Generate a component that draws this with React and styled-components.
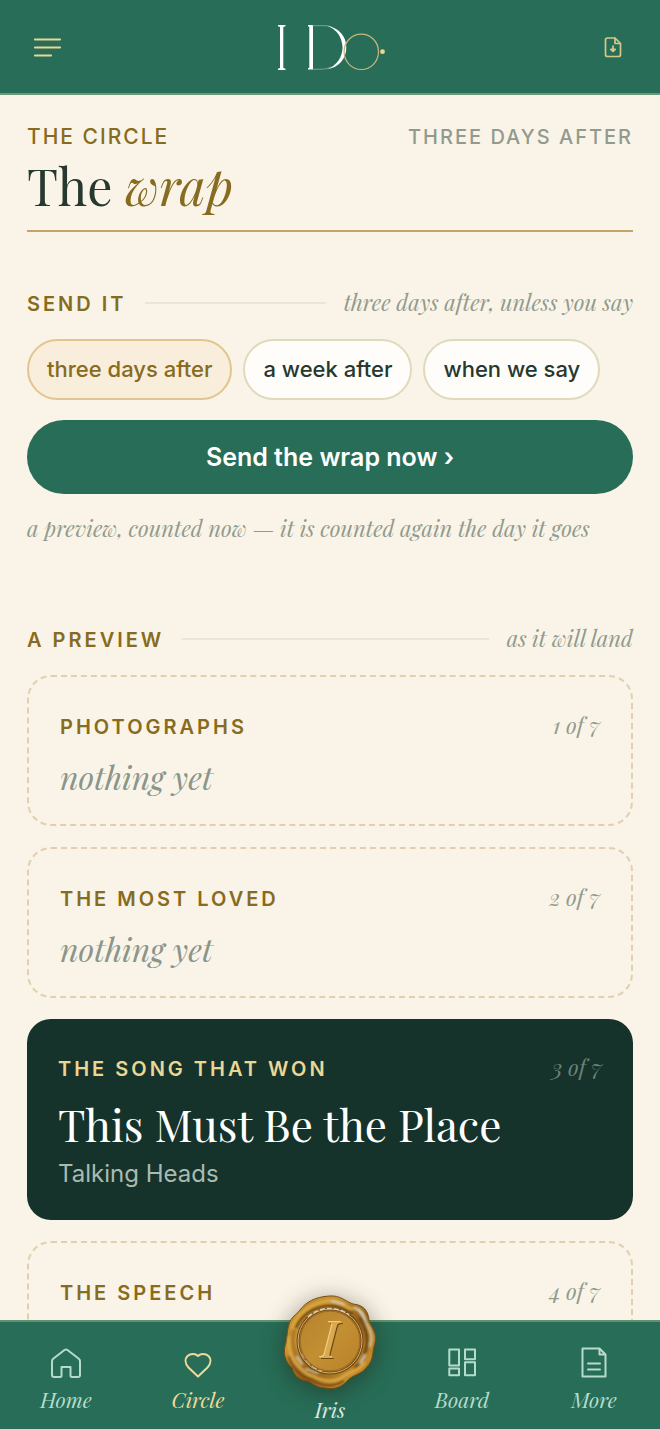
import { useState } from "react";
import styled, { createGlobalStyle } from "styled-components";

const serif = `"Playfair Display", "Liberation Serif", serif`;
const sans = `Inter, "Liberation Sans", sans-serif`;

const GlobalStyle = createGlobalStyle`
    * {
        box-sizing: border-box;
    }
    body {
        margin: 0;
        background: #f9f4e7;
        font-family: ${sans};
        color: #26382f;
    }
    h1, h2, h3, p {
        margin: 0;
        font-weight: 400;
    }
    button {
        font-family: inherit;
        cursor: pointer;
    }
`;

const Screen = styled.div`
    display: flex;
    flex-direction: column;
    height: 100vh;
`;

/* top bar */
const TopBar = styled.header`
    display: flex;
    align-items: center;
    justify-content: space-between;
    flex: none;
    padding: 22px 32px;
    background: #276d57;
    border-bottom: 2px solid #6d9876;
`;
const IconButton = styled.button`
    display: flex;
    padding: 0;
    border: 0;
    background: none;
`;
const LogoLink = styled.a`
    display: flex;
`;

/* content */
const Main = styled.main`
    flex: 1;
    min-height: 0;
    overflow-y: auto;
    scrollbar-width: none;
    padding: 28px 27px 64px;
`;
const PageHead = styled.div`
    padding-bottom: 9px;
    border-bottom: 2px solid #c6a468;
`;
const EyebrowRow = styled.div`
    display: flex;
    justify-content: space-between;
    line-height: 28px;
    font-weight: 500;
    letter-spacing: 2px;
`;
const Eyebrow = styled.span`
    font-size: ${(props) => (props.$muted ? "20px" : "21px")};
    color: ${(props) => (props.$muted ? "#919a8d" : "#876b20")};
`;
const Title = styled.h1`
    font-family: ${serif};
    font-size: 50px;
    line-height: 70px;
    em {
        color: #876b20;
    }
`;

const Section = styled.section`
    margin-top: ${(props) => (props.$far ? "78px" : "54px")};
`;
const SectionHead = styled.div`
    display: flex;
    align-items: baseline;
    gap: 18px;
    margin-bottom: 19px;
    line-height: 32px;
`;
const Label = styled.h2`
    font-size: 20px;
    font-weight: 600;
    letter-spacing: 3px;
    color: ${(props) => (props.$light ? "#ecd693" : "#876b20")};
`;
const Line = styled.span`
    flex: 1;
    align-self: center;
    height: 2px;
    background: #e9e5d8;
`;
const Note = styled.p`
    font-family: ${serif};
    font-size: 22px;
    line-height: 32px;
    font-style: italic;
    color: #919a8d;
`;

const Chips = styled.div`
    display: flex;
    flex-wrap: wrap;
    gap: 11px;
`;
const Chip = styled.button`
    padding: 14px 18px;
    border: 2px solid ${(props) => (props.$active ? "#e1c590" : "#e0d9bc")};
    border-radius: 32px;
    background: ${(props) => (props.$active ? "#f9eedb" : "#fefdfa")};
    color: ${(props) => (props.$active ? "#876b20" : "#26382f")};
    font-size: 22px;
    line-height: 29px;
    font-weight: 500;
`;
const SendButton = styled.button`
    display: block;
    width: 100%;
    margin: 20px 0 18px;
    padding: 20px;
    border: 0;
    border-radius: 40px;
    background: #276d57;
    color: #fff;
    font-size: 25px;
    line-height: 34px;
    font-weight: 600;
`;

const Cards = styled.div`
    display: grid;
    gap: 21px;
`;
const Card = styled.article`
    padding: 30px 31px 27px;
    border: ${(props) => (props.$dark ? "0" : "2px dashed #e2cfb0")};
    border-radius: 24px;
    background: ${(props) => (props.$dark ? "#15332a" : "transparent")};
`;
const CardHead = styled.div`
    display: flex;
    align-items: baseline;
    justify-content: space-between;
    margin-bottom: 10px;
    line-height: 40px;
`;
const Count = styled.span`
    font-family: ${serif};
    font-size: 22px;
    line-height: 36px;
    font-style: italic;
    color: ${(props) => (props.$dark ? "#6d8279" : "#919a8d")};
`;
const Empty = styled.p`
    font-family: ${serif};
    font-size: 32px;
    line-height: 40px;
    font-style: italic;
    color: #8b958a;
`;
const Song = styled.h3`
    font-family: ${serif};
    font-size: 44px;
    line-height: 50px;
    color: #fff;
`;
const Artist = styled.p`
    margin-top: 6px;
    font-size: 24px;
    line-height: 38px;
    color: #a9bab2;
`;

/* bottom tabs */
const TabBar = styled.nav`
    display: grid;
    grid-template-columns: repeat(5, 1fr);
    flex: none;
    position: relative;
    padding: 25px 0 16px;
    background: #276d57;
    border-top: 2px solid #5f966f;
`;
const Tab = styled.a`
    display: flex;
    flex-direction: column;
    align-items: center;
    gap: 6px;
    font-family: ${serif};
    font-size: 21px;
    line-height: 28px;
    font-style: italic;
    text-decoration: none;
    color: ${(props) => (props.$active ? "#f0d99a" : "#b5dccb")};
`;
const SealTab = styled(Tab)`
    gap: 4px;
    margin: -52px 0 -10px;
    color: #dcece4;
`;
const Seal = styled.svg`
    filter: drop-shadow(0 4px 12px rgba(30, 25, 10, 0.45));
`;

const MenuIcon = () => (
    <svg width="30" height="30" viewBox="0 0 30 30" fill="none" stroke="#ecd693" strokeWidth="2.2" strokeLinecap="round">
        <path d="M3 7.500h25M3 15.500h25M3 23.500h16" />
    </svg>
);

const DownloadIcon = () => (
    <svg width="30" height="30" viewBox="0 0 30 30" fill="none" stroke="#d5c98a" strokeWidth="1.700" strokeLinejoin="round" strokeLinecap="round">
        <path d="M17 6H9.500Q7.500 6 7.500 8V22.500Q7.500 24.500 9.500 24.500H20.500Q22.500 24.500 22.500 22.500V11.500L17 6v5.500h5.500" />
        <path d="M15 14v4M12.800 17.300h4.400L15 19.500z" fill="#d5c98a" />
    </svg>
);

const Logo = () => (
    <svg width="110" height="49" viewBox="275 22 110 49" fill="none">
        <path d="M278 25h7.500v1.200L283.300 27v41l2.200.8V70H278v-1.200l2-.8V27l-2-.8z" fill="#fff" />
        <path d="M308 25h5v44.500h-5v-1.200l1.300-.6V27l-1.300-.8z" fill="#fff" />
        <path d="M312 25.700h12c4 0 6 .8 8 2M312 69.200h8c5 0 8-.8 11-2.400" stroke="#a9cbbd" strokeWidth=".6" />
        <path d="M327 25.500C339 28 346.300 36 346.300 47.500S339 67 327 69.500C337 65 342 58 342.600 47.500C342 37 337 29.500 327 25.500z" fill="#fff" />
        <ellipse cx="361.300" cy="51.800" rx="17.200" ry="17.700" stroke="#c8b67e" strokeWidth="1.200" />
        <circle cx="382.500" cy="51.700" r="2.400" fill="#ecd693" />
    </svg>
);

const tabIcons = {
    Home: <path d="M3.500 11.500Q2 12.700 2 14V28Q2 30 4 30H10Q11.500 30 11.500 28.500V20H20.500V28.500Q20.500 30 22 30H28Q30 30 30 28V14Q30 12.700 28.500 11.500L17.500 3Q16 2 14.500 3z" />,
    Circle: <path d="M16 29.500L6.500 20.500C2.500 16 3 11.500 5.500 9C8.500 6.300 13.500 6.500 16 9C18.500 6.500 23.500 6.300 26.500 9C29 11.500 29.500 16 25.500 20.500z" />,
    Board: <path d="M3.300 2.500h9.700v16H3.300zM3.300 21.500h9.700v6.700H3.300zM19 2.500h10v9.700H19zM19 15.300h10v12.900H19z" />,
    More: <path d="M4.500 1.500h17l6 6v22h-23zM21.500 1.500v6h6M10 16.500h12M10 22.500h12" />,
};

const TabIcon = ({ name }) => (
    <svg width="32" height="32" viewBox="0 0 32 32" fill="none" stroke="currentColor" strokeWidth="2" strokeLinejoin="round" strokeLinecap="round">
        {tabIcons[name]}
    </svg>
);

const sealEdge =
    "M45 1C56 0 61 6 69 9C80 10 84 16 85 25C87 33 94 38 91 48C88 56 90 65 83 72C77 80 70 79 64 85C58 92 50 95 41 93C34 93 29 89 24 86C15 86 10 80 8 73C2 67 -1 60 1 51C4 44 2 38 5 29C7 22 12 20 16 15C22 7 31 2 45 1z";

const SealMark = () => (
    <Seal width="92" height="96" viewBox="0 0 92 96" aria-hidden="true">
        <defs>
            <linearGradient id="wax" x1="0" y1="0" x2="1" y2="1">
                <stop offset="0" stopColor="#b97f20" />
                <stop offset=".3" stopColor="#c99434" />
                <stop offset=".55" stopColor="#8e5c16" />
                <stop offset=".8" stopColor="#c38b2c" />
                <stop offset="1" stopColor="#7a4b12" />
            </linearGradient>
            <linearGradient id="face" x1="0" y1="0" x2="1" y2="1">
                <stop offset="0" stopColor="#b5822e" />
                <stop offset=".5" stopColor="#c38f33" />
                <stop offset="1" stopColor="#b98228" />
            </linearGradient>
            <filter id="soft" x="-20%" y="-20%" width="140%" height="140%">
                <feGaussianBlur stdDeviation="0.8" />
            </filter>
        </defs>
        <path d={sealEdge} fill="url(#wax)" stroke="#794c14" strokeWidth="1" />
        <g fill="none" strokeLinecap="round" filter="url(#soft)">
            <path d="M8 33C12 21 25 8 43 6C53 5 60 10 67 14" stroke="#dba945" strokeWidth="3" />
            <path d="M12 32C18 20 28 13 42 11C54 10 60 15 68 18" stroke="#6d4210" strokeWidth="2.500" />
            <path d="M70 13C79 15 80 21 82 28C88 36 89 43 86 51" stroke="#d3bb85" strokeWidth="3" />
            <path d="M77 23C82 32 85 45 82 54C80 62 77 68 71 73" stroke="#704512" strokeWidth="3" />
            <path d="M5 43C4 53 6 61 12 68C18 75 22 80 29 81C41 88 53 87 60 81C67 76 76 75 80 68" stroke="#dba742" strokeWidth="3" />
            <path d="M5 62C8 72 14 79 24 83C36 91 49 93 59 86" stroke="#6e4313" strokeWidth="2" />
            <path d="M10 36C7 48 10 59 15 65" stroke="#a87628" strokeWidth="3" />
            <path d="M48 6l12 3M74 15l7 9M13 62l5 7M22 74l12 4M81 60l-5 8" stroke="#d9dbd0" strokeWidth="1.700" />
        </g>
        <circle cx="46" cy="46" r="33.500" fill="#754713" />
        <circle cx="46" cy="46" r="32" fill="none" stroke="#cdb477" strokeWidth="1" />
        <path d="M24 22C34 12 53 10 65 20" fill="none" stroke="#d6d2c0" strokeWidth="1.500" strokeDasharray="5 2" />
        <path d="M18 58C22 67 29 73 38 76" fill="none" stroke="#d6d2c0" strokeWidth="1.500" strokeDasharray="6 2" />
        <circle cx="46" cy="46" r="30" fill="url(#face)" stroke="#a06f22" strokeWidth="1.500" />
        <g fontFamily="Playfair Display, Liberation Serif, serif" fontStyle="italic" fontSize="50" textAnchor="middle">
            <text x="47" y="64" fill="#6f4510">I</text>
            <text x="45" y="62" fill="#f0cd85">I</text>
            <text x="46" y="63" fill="#d9a94f">I</text>
        </g>
    </Seal>
);

const timings = ["three days after", "a week after", "when we say"];

const cards = [
    { label: "PHOTOGRAPHS" },
    { label: "THE MOST LOVED" },
    { label: "THE SONG THAT WON", song: "This Must Be the Place", artist: "Talking Heads" },
    { label: "THE SPEECH" },
];

const WrapCard = ({ card, index }) => {
    const dark = Boolean(card.song);
    return (
        <Card $dark={dark}>
            <CardHead>
                <Label as="h3" $light={dark}>{card.label}</Label>
                <Count $dark={dark}>{index + 1} of 7</Count>
            </CardHead>
            {dark ? (
                <>
                    <Song>{card.song}</Song>
                    <Artist>{card.artist}</Artist>
                </>
            ) : (
                <Empty>nothing yet</Empty>
            )}
        </Card>
    );
};

const NavTab = ({ name, active }) => (
    <Tab href={`#${name.toLowerCase()}`} $active={active} aria-current={active ? "page" : undefined}>
        <TabIcon name={name} />
        {name}
    </Tab>
);

export default function App() {
    const [timing, setTiming] = useState(timings[0]);

    return (
        <Screen>
            <GlobalStyle />
            <TopBar>
                <IconButton aria-label="Menu"><MenuIcon /></IconButton>
                <LogoLink href="#home" aria-label="I Do"><Logo /></LogoLink>
                <IconButton aria-label="Download"><DownloadIcon /></IconButton>
            </TopBar>

            <Main>
                <PageHead>
                    <EyebrowRow>
                        <Eyebrow>THE CIRCLE</Eyebrow>
                        <Eyebrow $muted>THREE DAYS AFTER</Eyebrow>
                    </EyebrowRow>
                    <Title>The <em>wrap</em></Title>
                </PageHead>

                <Section>
                    <SectionHead>
                        <Label>SEND IT</Label>
                        <Line />
                        <Note>three days after, unless you say</Note>
                    </SectionHead>
                    <Chips>
                        {timings.map((t) => (
                            <Chip key={t} $active={t === timing} aria-pressed={t === timing} onClick={() => setTiming(t)}>
                                {t}
                            </Chip>
                        ))}
                    </Chips>
                    <SendButton>Send the wrap now ›</SendButton>
                    <Note>a preview, counted now — it is counted again the day it goes</Note>
                </Section>

                <Section $far>
                    <SectionHead>
                        <Label>A PREVIEW</Label>
                        <Line />
                        <Note>as it will land</Note>
                    </SectionHead>
                    <Cards>
                        {cards.map((card, i) => (
                            <WrapCard key={card.label} card={card} index={i} />
                        ))}
                    </Cards>
                </Section>
            </Main>

            <TabBar>
                <NavTab name="Home" />
                <NavTab name="Circle" active />
                <SealTab href="#iris">
                    <SealMark />
                    Iris
                </SealTab>
                <NavTab name="Board" />
                <NavTab name="More" />
            </TabBar>
        </Screen>
    );
}
